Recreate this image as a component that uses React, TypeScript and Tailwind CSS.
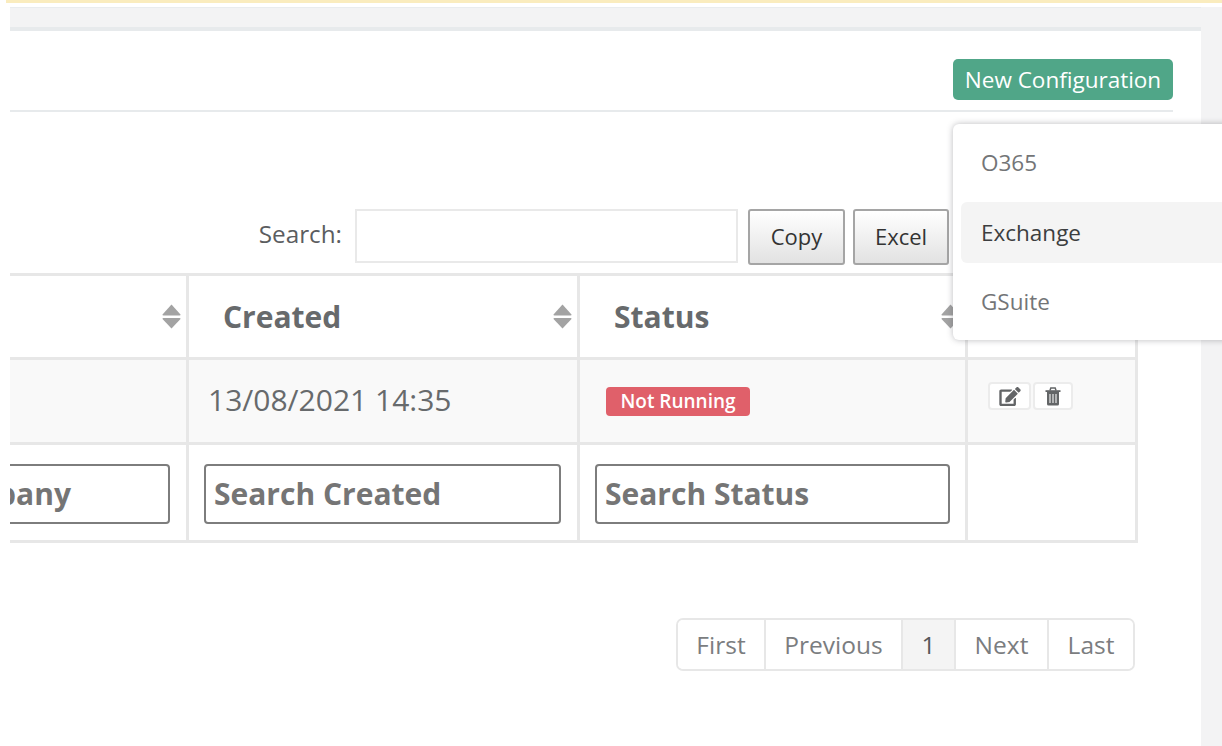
import { FaEdit } from "react-icons/fa";

const COLS = "grid-cols-[179px_391px_388px_170px]";

function SortIcon() {
  return (
    <svg viewBox="0 0 19 25" className="w-[19px] h-[25px] shrink-0" fill="#a3a3a3">
      <path d="M9.5 0.5 L18.5 10.5 Q18.8 11.5 17.5 11.5 L1.5 11.5 Q0.2 11.5 0.5 10.5 Z" />
      <path d="M1.5 14 L17.5 14 Q18.8 14 18.5 15 L9.5 24.5 L0.5 15 Q0.2 14 1.5 14 Z" />
    </svg>
  );
}

function TrashIcon() {
  return (
    <svg viewBox="0 0 16 19" className="h-[19px] w-[16px]">
      <path d="M0.5 3.2 H15.5 V5 H0.5 Z" fill="#636567" />
      <path d="M5 3.4 L5.8 1 H10.2 L11 3.4" fill="none" stroke="#636567" strokeWidth="1.5" />
      <path d="M2 5 H14 V17 Q14 18.5 12.5 18.5 H3.5 Q2 18.5 2 17 Z" fill="#636567" />
      <path d="M5 7 V16 M8 7 V16 M11 7 V16" stroke="#f6f6f6" strokeWidth="1.1" />
    </svg>
  );
}

function HeadCell({ label, last }: { label?: string; last?: boolean }) {
  return (
    <div className="flex items-center justify-between border-r-[3px] border-[#e7e7e7] pl-[34px] pr-[5px] min-w-0">
      <span className="text-[30px] font-bold text-[#676a6c] whitespace-nowrap">{label}</span>
      {!last && <SortIcon />}
    </div>
  );
}

function SearchInput({ placeholder, width }: { placeholder: string; width: string }) {
  return (
    <input
      readOnly
      placeholder={placeholder}
      className={`${width} mt-[2px] h-[60px] shrink-0 rounded-[4px] border-2 border-[#7d7d7d] bg-white px-[8px] text-[30px] font-bold text-[#676a6c] placeholder:text-[#757575] outline-none`}
    />
  );
}

function PageItem({ label, width, active, last }: { label: string; width: string; active?: boolean; last?: boolean }) {
  return (
    <div
      className={`${width} flex items-center justify-center pt-[1px] text-[24.5px] ${last ? "" : "border-r-2 border-[#e7e7e7]"} ${
        active ? "bg-[#f4f4f4] text-[#555759]" : "bg-white text-[#7b7d7f]"
      }`}
    >
      {label}
    </div>
  );
}

function GradientButton({ label, width }: { label: string; width: string }) {
  return (
    <div
      className={`${width} h-[56px] flex items-center justify-center rounded-[3px] border-2 border-[#a5a5a5] bg-gradient-to-b from-white to-[#e2e2e2] pb-[1px] text-[22px] text-[#333]`}
    >
      {label}
    </div>
  );
}

export default function App() {
  return (
    <div className="relative flex h-[746px] w-[1222px] flex-col overflow-hidden bg-white font-['Open_Sans','Liberation_Sans',sans-serif] text-[#676a6c]">
      <div className="ml-[6px] h-[3px] shrink-0 bg-[#faecbe]" />
      <div className="ml-[10px] mt-[4px] flex min-h-0 flex-1">
        <main className="w-[1191px] shrink-0">
          <div className="h-[24px] border-t border-[#e9ecee] border-b-[4px] border-b-[#e7eaec] bg-[#f3f3f4]" />

          <div className="mr-[28px] flex h-[81px] justify-end border-b-2 border-[#e7eaec] pt-[28px]">
            <div className="flex h-[41px] w-[220px] items-center justify-center rounded-[5px] bg-[#50a688] text-[22.5px] text-white">
              New Configuration
            </div>
          </div>

          <div className="mt-[97px] flex h-[56px] items-start justify-end pr-[252px]">
            <span className="mr-[13px] mt-[9px] text-[24.3px] leading-[32px] text-[#5b5d5f]">Search:</span>
            <div className="h-[54px] w-[383px] border-2 border-[#e9e9e9] bg-white" />
            <div className="ml-[10px] flex gap-[8px]">
              <GradientButton label="Copy" width="w-[97px]" />
              <GradientButton label="Excel" width="w-[96px]" />
            </div>
          </div>

          <div className="mt-[8px] w-[1128px] border-y-[3px] border-[#e7e7e7]">
            <div className={`grid h-[81px] ${COLS}`}>
              <HeadCell />
              <HeadCell label="Created" />
              <HeadCell label="Status" />
              <div className="border-r-[3px] border-[#e7e7e7]" />
            </div>
            <div className={`grid h-[88px] ${COLS} border-y-[3px] border-[#e7e7e7] bg-[#f9f9f9]`}>
              <div className="border-r-[3px] border-[#e7e7e7]" />
              <div className="flex items-center border-r-[3px] border-[#e7e7e7] pb-[3px] pl-[19px] text-[30px]">
                13/08/2021 14:35
              </div>
              <div className="flex items-center border-r-[3px] border-[#e7e7e7] pl-[26px]">
                <span className="flex h-[29px] w-[144px] items-center justify-center rounded-[4px] bg-[#e0606a] text-[19px] font-semibold text-white">
                  Not Running
                </span>
              </div>
              <div className="flex items-start gap-[2px] border-r-[3px] border-[#e7e7e7] pl-[20px] pt-[22px]">
                <span className="flex h-[28px] w-[43px] items-center justify-center rounded-[4px] border-2 border-[#ececec] bg-white text-[#636567]">
                  <FaEdit className="h-[19px] w-[22px]" />
                </span>
                <span className="flex h-[28px] w-[40px] items-center justify-center rounded-[4px] border-2 border-[#ececec] bg-white">
                  <TrashIcon />
                </span>
              </div>
            </div>
            <div className={`grid h-[95px] ${COLS}`}>
              <div className="flex items-center justify-end overflow-hidden border-r-[3px] border-[#e7e7e7] pr-[16px]">
                <SearchInput placeholder="Search Company" width="w-[359px]" />
              </div>
              <div className="flex items-center border-r-[3px] border-[#e7e7e7] pl-[15px]">
                <SearchInput placeholder="Search Created" width="w-[357px]" />
              </div>
              <div className="flex items-center border-r-[3px] border-[#e7e7e7] pl-[15px]">
                <SearchInput placeholder="Search Status" width="w-[355px]" />
              </div>
              <div className="border-r-[3px] border-[#e7e7e7]" />
            </div>
          </div>

          <div className="mr-[66px] mt-[75px] flex justify-end">
            <div className="flex h-[53px] w-[459px] overflow-hidden rounded-[7px] border-2 border-[#e7e7e7]">
              <PageItem label="First" width="w-[88px]" />
              <PageItem label="Previous" width="w-[137px]" />
              <PageItem label="1" width="w-[53px]" active />
              <PageItem label="Next" width="w-[93px]" />
              <PageItem label="Last" width="flex-1" last />
            </div>
          </div>
        </main>
        <aside className="flex-1 bg-[#f3f3f4]" />
      </div>

      <div className="absolute left-[953px] top-[124px] h-[216px] w-[300px] rounded-[6px] bg-white pt-[8px] pl-[8px] shadow-[0_0_6px_rgba(60,60,70,0.35)]">
        <div className="flex h-[61px] items-center pl-[20px] pt-[1px] text-[22.5px] text-[#737577]">O365</div>
        <div className="mt-[9px] flex h-[61px] items-center rounded-[6px] bg-[#f4f4f4] pl-[20px] text-[22.5px] text-[#3c3e40]">
          Exchange
        </div>
        <div className="mt-[8px] flex h-[61px] items-center pl-[20px] text-[22.5px] text-[#737577]">GSuite</div>
      </div>
    </div>
  );
}
